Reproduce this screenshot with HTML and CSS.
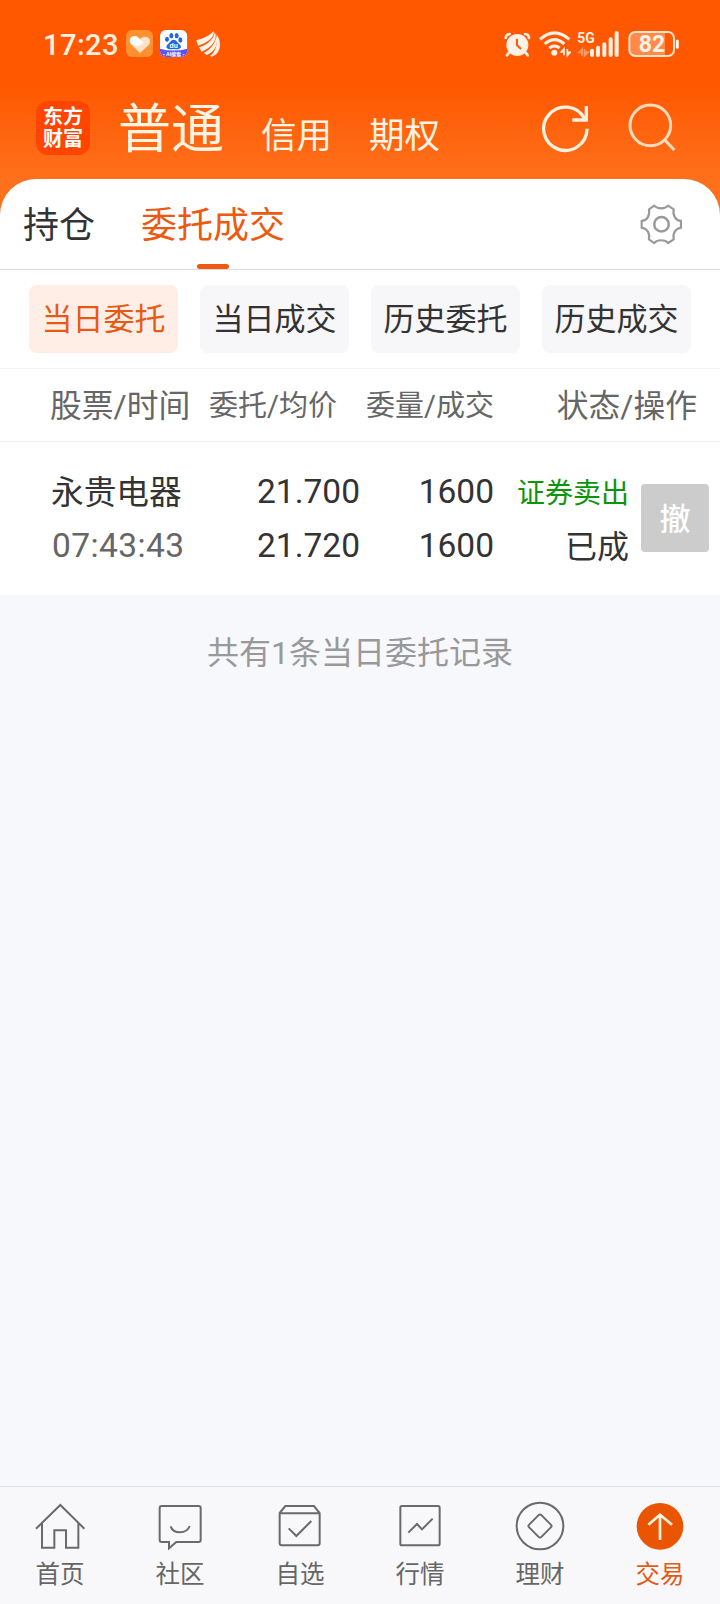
FILE: index.html
```html
<!DOCTYPE html>
<html lang="zh-CN">
<head>
<meta charset="utf-8">
<title>委托成交</title>
<link rel="stylesheet" href="styles.css">
</head>
<body>
<header class="top">
  <div class="status">
    <span class="clock">17:23</span>
    <svg class="app-heart" width="27" height="30" viewBox="288 42 81 90">
      <rect x="288" y="45" width="81" height="81" rx="18" fill="#ff9130"/>
      <path d="M330 114L303 87C292 72 308 56 323 66L330 72C346 56 369 70 357 89Z" fill="#ffe3c8"/>
      <path d="M303 87C292 72 308 56 323 66L340 82C334 93 319 94 309 91Z" fill="#fff"/>
    </svg>
    <svg class="app-du" width="28" height="30" viewBox="390 42 84 90">
      <defs><clipPath id="tile"><rect x="390" y="45" width="82" height="81" rx="18"/></clipPath></defs>
      <g clip-path="url(#tile)">
        <rect x="390" y="45" width="82" height="81" fill="#fff"/>
        <path d="M390 101Q431 112 472 101V126H390Z" fill="#5b55f0"/>
      </g>
      <g fill="#2468dc">
        <ellipse cx="411" cy="73" rx="6" ry="8"/><ellipse cx="424" cy="62" rx="6" ry="8"/>
        <ellipse cx="440" cy="62" rx="6" ry="8"/><ellipse cx="451" cy="75" rx="6" ry="8"/>
        <path d="M431 74C440 74 443 84 450 89C458 98 448 105 431 102C414 105 404 98 412 89C419 84 422 74 431 74Z"/>
      </g>
      <text class="du-word" x="431" y="99" text-anchor="middle">du</text>
      <text class="du-tag" x="431" y="122" text-anchor="middle">·AI搜索·</text>
    </svg>
    <svg class="app-wing" width="25" height="30" viewBox="498 42 75 90">
      <g fill="#fff1e6">
        <path d="M499 76C520 69 540 62 551 47C556 67 530 84 504 92Z"/>
        <path d="M507 97C532 88 549 77 555 51C564 74 545 98 515 110Z"/>
        <path d="M540 123C558 109 562 90 560 58C577 84 572 116 546 125Z"/>
        <path d="M521 114C544 101 556 86 559 62C566 84 556 110 530 120Z"/>
      </g>
    </svg>
    <span class="spacer"></span>
    <svg class="st-alarm" width="27" height="30" viewBox="40 42 81 90">
      <circle cx="80" cy="90" r="33" fill="#fff1e6"/>
      <path d="M45 69Q46 58 57 57M103 57Q115 58 115 69M55 113L49 121M105 113L111 121" fill="none" stroke="#fff1e6" stroke-width="8" stroke-linecap="round"/>
      <path d="M79 72V91L91 102" fill="none" stroke="#ff5a00" stroke-width="6"/>
    </svg>
    <svg class="st-wifi" width="32" height="30" viewBox="145 42 96 90">
      <g fill="none" stroke="#fff1e6" stroke-width="9">
        <path d="M148 73Q191 34 236 73"/><path d="M162 87Q191 61 221 87"/><path d="M176 99Q191 87 207 99"/>
      </g>
      <circle cx="191" cy="113" r="9" fill="#fff1e6"/>
      <path d="M220 121V102L212 111H220M230 102V122L239 112H230" fill="none" stroke="#fff1e6" stroke-width="5"/>
    </svg>
    <svg class="st-signal" width="43" height="30" viewBox="260 42 129 90">
      <text class="net" x="261" y="84" textLength="52" lengthAdjust="spacingAndGlyphs">5G</text>
      <path d="M275 122V103L266 112H275M283 103V122L292 112H283" fill="none" stroke="#ff9a66" stroke-width="6"/>
      <path d="M305 107V120M323 98V120M342 88V120M361 73V120M379 54V120" fill="none" stroke="#fff1e6" stroke-width="12" stroke-linecap="round"/>
    </svg>
    <svg class="st-battery" width="52" height="30" viewBox="413 42 156 90">
      <path d="M430 53H524V121H430Q419 121 419 108V66Q419 53 430 53Z" fill="#ff8a4a"/>
      <rect x="417" y="51" width="134" height="72" rx="18" fill="none" stroke="#ffe3cf" stroke-width="6"/>
      <path d="M561 78V97" stroke="#fff1e6" stroke-width="9" stroke-linecap="round"/>
      <text class="charge" x="485" y="111" text-anchor="middle">82</text>
    </svg>
  </div>
  <div class="titlebar">
    <div class="logo"><span>东方</span><span>财富</span></div>
    <nav class="accounts">
      <span class="account current">普通</span>
      <span class="account">信用</span>
      <span class="account">期权</span>
    </nav>
    <svg class="refresh" width="50" height="50" viewBox="183 70 150 150" fill="none" stroke="#fff1e0" stroke-width="10">
      <path d="M321 147A65 65 0 1 1 313 116"/>
      <path d="M319 79V121H277"/>
    </svg>
    <svg class="search" width="50" height="50" viewBox="440 70 150 150" fill="none" stroke="#ffdcc0" stroke-width="9">
      <circle cx="510" cy="137" r="61"/>
      <path d="M552 180L582 211"/>
    </svg>
  </div>
</header>

<main class="panel">
  <div class="tabs">
    <span class="tab">持仓</span>
    <span class="tab active">委托成交</span>
    <svg class="gear" width="43" height="43" viewBox="480 367 130 130" fill="none" stroke="#999" stroke-width="6.5" stroke-linejoin="round">
      <path d="M523 375C532 386 556 386 565 375L582 386C578 405 588 420 604 421V442C588 443 578 458 582 477L565 488C556 477 532 477 523 488L507 477C511 458 501 443 485 442V421C501 420 511 405 507 386Z"/>
      <circle cx="545" cy="431" r="22" stroke-width="7.5"/>
    </svg>
  </div>
  <div class="chips">
    <span class="chip on">当日委托</span>
    <span class="chip">当日成交</span>
    <span class="chip">历史委托</span>
    <span class="chip">历史成交</span>
  </div>
  <div class="head">
    <span class="big">股票/时间</span>
    <span class="num">委托/均价</span>
    <span class="num">委量/成交</span>
    <span class="big end">状态/操作</span>
  </div>
  <div class="order">
    <div class="cell"><span class="name">永贵电器</span><span class="time">07:43:43</span></div>
    <div class="cell right"><span>21.700</span><span>21.720</span></div>
    <div class="cell right"><span>1600</span><span>1600</span></div>
    <div class="cell right"><span class="side">证券卖出</span><span class="state">已成</span></div>
    <span class="cancel">撤</span>
  </div>
</main>
<p class="summary">共有1条当日委托记录</p>

<footer class="nav">
  <div class="item">
    <svg width="54" height="54" viewBox="99 57 162 162">
      <path d="M108 146L181 75L253 146M126 130V203H163V151H198V203H235V130"/>
    </svg><span>首页</span>
  </div>
  <div class="item">
    <svg width="54" height="54" viewBox="459 57 162 162">
      <path d="M485 78H596Q602 78 602 84V180Q602 186 596 186H529L507 205V186H485Q479 186 479 180V84Q479 78 485 78ZM512 139Q518 157 540 157Q562 157 569 138"/>
    </svg><span>社区</span>
  </div>
  <div class="item">
    <svg width="54" height="54" viewBox="99 57 162 162">
      <path d="M119 99L136 78H222L239 99V190Q239 196 233 196H125Q119 196 119 190ZM119 100H239M146 145L169 168L214 123"/>
    </svg><span>自选</span>
  </div>
  <div class="item">
    <svg width="54" height="54" viewBox="459 57 162 162">
      <rect x="481" y="78" width="118" height="118" rx="5"/>
      <path d="M505 158L531 132L546 148L578 116"/>
    </svg><span>行情</span>
  </div>
  <div class="item">
    <svg width="54" height="54" viewBox="99 57 162 162">
      <circle cx="180" cy="138" r="70"/>
      <rect x="154" y="112" width="52" height="52" rx="6" transform="rotate(45 180 138)"/>
    </svg><span>理财</span>
  </div>
  <div class="item selected">
    <svg width="54" height="54" viewBox="460 57 162 162">
      <circle class="disc" cx="541" cy="139" r="70"/>
      <path class="arrow" d="M541 180V105M506 134L541 104L577 134"/>
    </svg><span>交易</span>
  </div>
</footer>
</body>
</html>
```
FILE: styles.css
```css
* { box-sizing: border-box; }

body {
  margin: 0;
  width: 720px;
  height: 1604px;
  display: flex;
  flex-direction: column;
  background: #f7f8fb;
  color: #333;
  font-family: Roboto, "Noto Sans CJK SC", sans-serif;
  overflow: hidden;
}

svg { display: block; flex: none; }

.top {
  height: 215px;
  flex: none;
  background: linear-gradient(#ff5800 0, #ff5800 85px, #ff701c 179px, #ff701c 100%);
}

.status {
  height: 88px;
  display: flex;
  align-items: center;
  padding: 0 40px 0 43px;
}

.clock {
  width: 83px;
  padding-top: 1px;
  font-size: 29px;
  font-weight: 500;
  letter-spacing: 0.5px;
  color: #fff1e0;
}

.app-du { margin-left: 7px; }
.app-wing { margin-left: 8px; }
.spacer { flex: 1; }
.st-wifi { margin-left: 8px; }
.st-signal { margin-left: 6px; }
.st-battery { margin-left: 8px; }

.du-word { font: 700 20px Inter, sans-serif; fill: #fff; }
.du-tag { font: 700 15px "Noto Sans CJK SC", sans-serif; fill: #fff; }
.net { font: 700 46px Roboto, sans-serif; fill: #fff1e6; }
.charge { font: 700 69px Roboto, sans-serif; fill: #fff1e6; }

.titlebar {
  height: 91px;
  display: flex;
  align-items: flex-start;
  padding: 13px 43px 0 36px;
}

.logo {
  width: 54px;
  height: 54px;
  border-radius: 12px;
  background: #ff4500;
  display: flex;
  flex-direction: column;
  align-items: center;
  justify-content: center;
  color: #fff;
  font-weight: 700;
  font-size: 20px;
  line-height: 22px;
}

.accounts {
  flex: 1;
  display: flex;
  align-items: baseline;
  margin: -3px 0 0 28px;
  color: #fff4e4;
}

.account { font-size: 35.5px; line-height: 64px; margin-left: 37px; }
.account.current { font-size: 53px; margin-left: 0; }

.refresh { margin-top: 2px; }
.search { margin: 2px 0 0 36px; }

.panel {
  margin-top: -36px;
  height: 416px;
  flex: none;
  background: #fff;
  border-radius: 36px 36px 0 0;
}

.tabs {
  height: 91px;
  display: flex;
  align-items: center;
  padding: 0 37px 0 23px;
  border-bottom: 1px solid #dcdcdc;
  font-size: 36px;
}

.tab {
  height: 90px;
  padding-top: 3px;
  line-height: 88px;
  margin-right: 46px;
}

.tab.active {
  display: flex;
  flex-direction: column;
  align-items: center;
  color: #eb5a10;
}

.tab.active::after {
  content: "";
  width: 32px;
  height: 5px;
  flex: none;
  border-radius: 3px;
  background: #f05a10;
  margin-top: -6px;
}

.gear { margin-left: auto; }

.chips {
  height: 99px;
  display: grid;
  grid-template-columns: repeat(4, 149px);
  gap: 22px;
  padding: 15px 0 0 29px;
  border-bottom: 1px solid #f3f3f3;
}

.chip {
  height: 68px;
  padding-top: 2px;
  line-height: 66px;
  border-radius: 8px;
  background: #f7f7fa;
  text-align: center;
  font-size: 31px;
}

.chip.on { background: #ffeee6; color: #e65a14; }

.head {
  height: 73px;
  display: grid;
  grid-template-columns: 153px 134px 157px 203px;
  align-items: center;
  padding: 0 0 4px 50px;
  border-bottom: 1px solid #ececec;
  color: #666;
  font-size: 29px;
  white-space: nowrap;
}

.big { font-size: 31.8px; }
.num { text-align: right; }
.end { text-align: right; }

.order {
  height: 153px;
  display: grid;
  grid-template-columns: 154px 155px 134px 135px 68px;
  align-items: start;
  padding: 23px 0 0 51px;
  font-size: 33.5px;
  line-height: 54px;
}

.cell { display: flex; flex-direction: column; }
.cell span { height: 54px; white-space: nowrap; }
.right { align-items: flex-end; }
.cell .name { font-size: 32.7px; padding-top: 1px; }
.time { color: #666; letter-spacing: 0.4px; padding-left: 1px; }
.cell .side { font-size: 28px; color: #0c940c; padding-top: 2px; }
.cell .state { font-size: 32px; padding-top: 1px; }

.cancel {
  width: 68px;
  height: 68px;
  margin: 19px 0 0 12px;
  padding-top: 3px;
  border-radius: 4px;
  background: #ccc;
  color: #fff;
  font-size: 31px;
  font-weight: 500;
  line-height: 66px;
  text-align: center;
}

.summary {
  margin: 38px 0 0;
  text-align: center;
  font-size: 32px;
  line-height: 40px;
  color: #999;
}

.nav {
  margin-top: auto;
  height: 118px;
  flex: none;
  display: grid;
  grid-template-columns: repeat(6, 120px);
  border-top: 1px solid #dfe0e2;
  background: #f8f8fb;
}

.item {
  display: flex;
  flex-direction: column;
  align-items: center;
  padding-top: 12px;
  color: #666;
  font-size: 24.5px;
  line-height: 32px;
}

.item svg { fill: none; stroke: #6a6a6a; stroke-width: 6; }
.item span { margin-top: 6px; }
.selected { color: #e45a14; }
.item .disc { fill: #ea5504; stroke: none; }
.item .arrow { stroke: #fff3df; stroke-width: 8; }
```
